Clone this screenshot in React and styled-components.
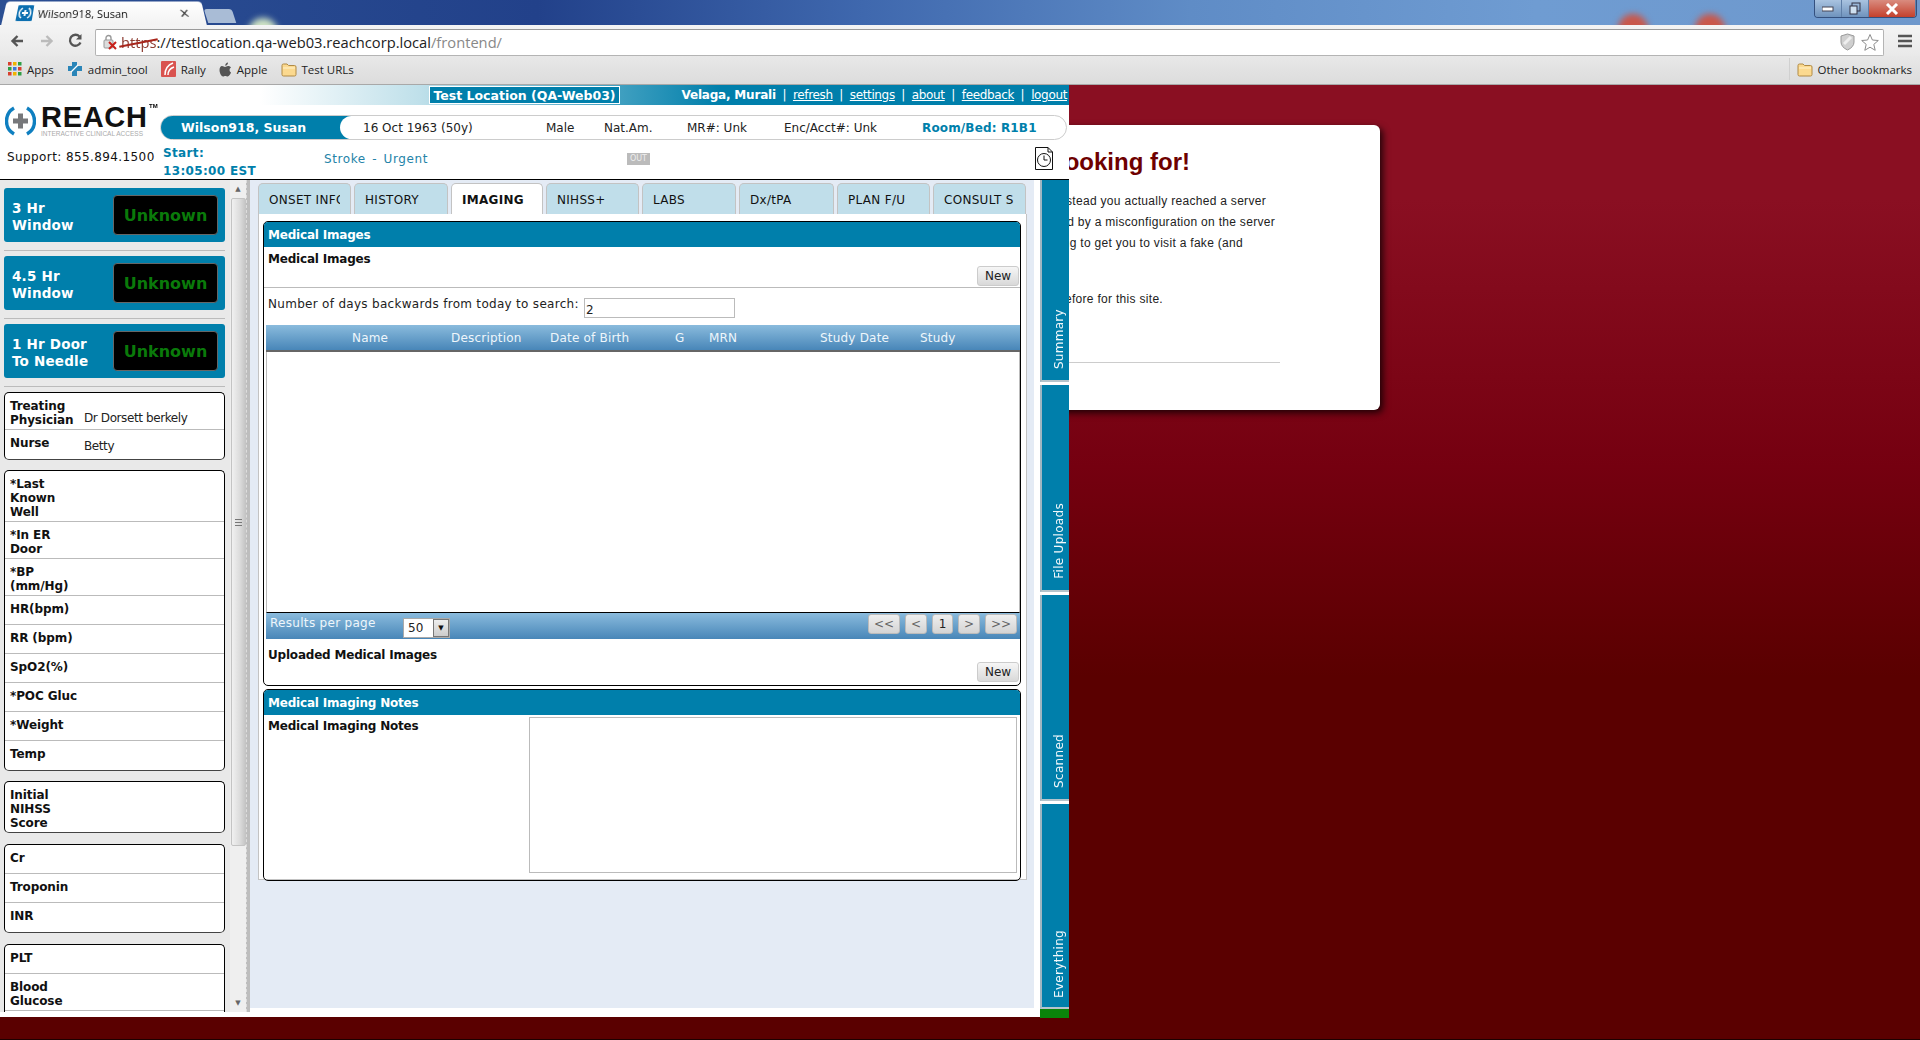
import styled, { createGlobalStyle } from 'styled-components'

const GlobalStyle = createGlobalStyle`
  html, body { margin: 0; padding: 0; height: 100%; overflow: hidden; }
  body { font-family: "DejaVu Sans", sans-serif; background: #5a0000; }
  * { box-sizing: border-box; }
`

const BLUE = '#007fab'

/* ---------- browser chrome ---------- */
const Browser = styled.div`
  width: 1920px;
  height: 85px;
  display: flex;
  flex-direction: column;
  font-family: "Open Sans", sans-serif;
`
const TabStrip = styled.div`
  height: 25px;
  position: relative;
  display: flex;
  align-items: flex-end;
  padding-left: 4px;
  overflow: hidden;
  background: linear-gradient(90deg, #2b4f93 0%, #22418a 28%, #3f68ae 45%, #5f8cc6 62%, #6f9cd2 80%, #6e98cc 100%);
`
const BrowserTab = styled.div`
  width: 200px;
  height: 24px;
  background: linear-gradient(#fff, #f3f3f3);
  border-radius: 4px 4px 0 0;
  transform: perspective(60px) rotateX(8deg);
  display: flex;
  align-items: center;
  padding-left: 13px;
  gap: 5px;
  font-size: 11px;
  color: #111;
  flex: none;
`
const TabTitle = styled.span`
  flex: 1;
`
const TabClose = styled.span`
  font-size: 13px;
  color: #444;
  margin-right: 14px;
`
const NewTab = styled.div`
  width: 28px;
  height: 14px;
  background: #a9bcd6;
  border-radius: 3px 3px 0 0;
  margin: 0 0 2px 2px;
  transform: skewX(18deg);
  flex: none;
`
const Blob = styled.div`
  position: absolute;
  top: ${p => p.$top}px;
  left: ${p => p.$left}px;
  width: ${p => p.$size}px;
  height: ${p => p.$size}px;
  border-radius: 50%;
  background: ${p => p.$color};
  filter: blur(3px);
`
const WindowControls = styled.div`
  position: absolute;
  top: 0;
  right: 3px;
  width: 103px;
  height: 18px;
  display: flex;
  border: 1px solid #34507e;
  border-top: 0;
  border-radius: 0 0 4px 4px;
  overflow: hidden;
`
const WinButton = styled.div`
  flex: ${p => p.$grow};
  display: flex;
  align-items: center;
  justify-content: center;
  background: ${p => p.$close ? 'linear-gradient(#d98c7f, #c4402c)' : 'linear-gradient(#a9c3e0, #6f93bd)'};
  border-right: 1px solid #5f7fa8;
`
const Toolbar = styled.div`
  height: 31px;
  background: linear-gradient(#f4f4f4, #e9e9e9);
  display: flex;
  align-items: center;
  padding-left: 8px;
`
const NavIcon = styled.div`
  width: ${p => p.$w}px;
  margin-left: ${p => p.$ml || 0}px;
  display: flex;
  justify-content: center;
  flex: none;
`
const AddressBar = styled.div`
  width: 1789px;
  height: 27px;
  margin-left: 7px;
  margin-top: 3px;
  background: #fff;
  border: 1px solid #b4b4b4;
  border-top-color: #9a9a9a;
  border-radius: 2px;
  display: flex;
  align-items: center;
  padding-left: 7px;
  padding-right: 3px;
  font-size: 14.7px;
  flex: none;
`
const Https = styled.span`
  position: relative;
  color: #8d3b30;
  margin-left: 3px;
  &::after {
    content: '';
    position: absolute;
    left: -2px;
    right: -2px;
    top: 10px;
    height: 2px;
    background: #a8261c;
    transform: rotate(-11deg);
  }
`
const UrlHost = styled.span`
  color: #222;
`
const UrlPath = styled.span`
  color: #888;
  flex: 1;
`
const Bookmarks = styled.div`
  height: 29px;
  background: linear-gradient(#e8e8e8, #dcdcdc);
  border-bottom: 1px solid #a8a8a8;
  display: flex;
  align-items: center;
  padding: 0 8px 2px 8px;
  font-size: 11.5px;
  color: #222;
`
const Bookmark = styled.div`
  display: flex;
  align-items: center;
  gap: 5px;
  margin-right: 13px;
  &:last-child { margin-right: 0; }
`
const BookmarkSpacer = styled.div`
  flex: 1;
`
const BookmarkDivider = styled.div`
  width: 1px;
  height: 22px;
  background: #d0d0d0;
  margin-right: 7px;
`

const Folder = () => (
  <svg width="16" height="15" viewBox="0 0 16 15">
    <path d="M1 3.5 Q1 2 2.5 2 H6 L7.5 3.5 H13.5 Q15 3.5 15 5 V12.5 Q15 14 13.5 14 H2.5 Q1 14 1 12.5 Z" fill="#fbd98f" stroke="#b08a45" />
    <path d="M2 6 H14" stroke="#fff2cc" />
  </svg>
)

/* ---------- page behind the app ---------- */
const Backdrop = styled.div`
  height: 955px;
  padding-top: 40px;
  background: linear-gradient(#8a0f22 0%, #8a0f22 12%, #750010 40%, #5a0000 62%, #5a0000 100%);
  border-bottom: 1px solid #1d0000;
`
const WarningCard = styled.div`
  width: 840px;
  height: 285px;
  margin: 0 auto;
  padding-right: 100px;
  background: #fff;
  border-radius: 6px;
  box-shadow: 3px 3px 7px rgba(0, 0, 0, 0.75);
  font-family: "Liberation Sans", sans-serif;
`
const WarningTitle = styled.h1`
  margin: 0;
  padding-top: 23px;
  padding-right: 90px;
  text-align: right;
  font-size: 24px;
  line-height: 28px;
  color: #6e0000;
`
const WarningLine = styled.div`
  text-align: right;
  white-space: nowrap;
  font-size: 12px;
  line-height: 21px;
  color: #222;
  letter-spacing: 0.3px;
  padding-right: ${p => p.$inset}px;
  margin-top: ${p => p.$top || 0}px;
`
const WarningRule = styled.div`
  height: 1px;
  background: #ccc;
  margin-top: 52px;
`

/* ---------- app window ---------- */
const AppWindow = styled.div`
  position: absolute;
  top: 85px;
  left: 0;
  width: 1069px;
  height: 932px;
  background: #fff;
  display: flex;
  flex-direction: column;
`
const TopBar = styled.div`
  height: 20px;
  flex: none;
  display: flex;
  align-items: center;
  color: #fff;
  font-size: 12px;
  padding-left: 429px;
  padding-right: 2px;
  background: linear-gradient(90deg, #fff 0, #fff 260px, #bfe0ea 420px, ${BLUE} 720px);
`
const LocationLabel = styled.div`
  width: 191px;
  height: 18px;
  background: ${BLUE};
  border: 1px solid #fff;
  font-weight: bold;
  font-size: 12.5px;
  display: flex;
  align-items: center;
  justify-content: center;
  white-space: nowrap;
`
const UserLinks = styled.div`
  margin-left: auto;
  display: flex;
  align-items: center;
  white-space: nowrap;
  gap: 6.5px;
`
const UserName = styled.b`
  font-size: 12px;
  letter-spacing: -0.2px;
`
const TopLink = styled.a`
  color: #fff;
  text-decoration: underline;
  letter-spacing: -0.35px;
`
const HeaderMain = styled.div`
  height: 75px;
  flex: none;
  display: grid;
  grid-template-columns: 160px 907px;
  border-bottom: 1px solid #000;
`
const LogoColumn = styled.div`
  display: flex;
  flex-direction: column;
`
const Logo = styled.div`
  height: 30px;
  margin-top: 1px;
  display: flex;
  padding-left: 5px;
`
const LogoWords = styled.div`
  margin-left: 5px;
  position: relative;
  font-family: "Liberation Sans", sans-serif;
`
const LogoMark = styled.div`
  font-size: 29px;
  font-weight: bold;
  line-height: 22px;
  letter-spacing: 0.7px;
  color: #111;
`
const LogoSub = styled.div`
  font-size: 6.5px;
  line-height: 8px;
  color: #aaa;
  white-space: nowrap;
  margin-top: 2px;
`
const LogoTm = styled.sup`
  position: absolute;
  top: -4px;
  left: 108px;
  font-size: 6px;
  line-height: 8px;
  font-weight: bold;
`
const Support = styled.div`
  margin-top: 14px;
  padding-left: 7px;
  font-size: 12px;
  letter-spacing: 0.4px;
  color: #111;
  white-space: nowrap;
`
const PatientColumn = styled.div`
  display: flex;
  flex-direction: column;
  padding-top: 10px;
`
const PatientPill = styled.div`
  height: 25px;
  display: flex;
  align-items: center;
  position: relative;
  border: 1px solid #ccc;
  border-radius: 13px;
  font-size: 12px;
  color: #222;
  overflow: hidden;
`
const PatientName = styled.div`
  width: 190px;
  height: 100%;
  background: ${BLUE};
  color: #fff;
  font-weight: bold;
  font-size: 12.5px;
  display: flex;
  align-items: center;
  padding-left: 20px;
  position: relative;
  &::after {
    content: '';
    position: absolute;
    right: -1px;
    top: 0;
    width: 12px;
    height: 100%;
    background: #fff;
    border-radius: 12px 0 0 12px;
  }
`
const PatientField = styled.div`
  position: absolute;
  left: ${p => p.$x}px;
  white-space: nowrap;
  color: ${p => p.$accent ? BLUE : '#222'};
  font-weight: ${p => p.$accent ? 'bold' : 'normal'};
  letter-spacing: ${p => p.$accent ? '0.15px' : '0'};
`
const StatusRow = styled.div`
  height: 39px;
  position: relative;
  display: flex;
  color: ${BLUE};
  font-size: 12px;
`
const StartTime = styled.div`
  width: 162px;
  padding: 4px 0 0 3px;
  font-weight: bold;
  line-height: 18px;
  letter-spacing: 0.35px;
`
const Stroke = styled.div`
  width: 305px;
  padding-top: 12px;
  padding-left: 2px;
  letter-spacing: 0.6px;
  word-spacing: 2px;
  color: #2483a8;
`
const OutBadge = styled.div`
  width: 23px;
  height: 12px;
  margin-top: 13px;
  background: #bbb;
  color: #eee;
  font-size: 8px;
  line-height: 12px;
  text-align: center;
`
const ClockDoc = styled.svg`
  position: absolute;
  top: 7px;
  right: 14px;
`

const AppBody = styled.div`
  flex: 1;
  display: flex;
  min-height: 0;
  align-items: flex-start;
`

/* sidebar */
const Sidebar = styled.div`
  width: 230px;
  height: 832px;
  flex: none;
  overflow: hidden;
  background: #e9e9e9;
  padding: 8px 5px 0 4px;
`
const TimerCard = styled.div`
  height: 54px;
  background: ${BLUE};
  border-radius: 3px;
  display: flex;
  align-items: center;
  justify-content: space-between;
  padding: 0 7px 0 8px;
  color: #fff;
  font-weight: bold;
  font-size: 13.5px;
  line-height: 17px;
  letter-spacing: 0.2px;
`
const TimerText = styled.div`
  padding-top: 3px;
`
const TimerValue = styled.div`
  width: 105px;
  height: 40px;
  background: #000;
  border: 1px solid #666;
  border-radius: 4px;
  color: #0a7a0a;
  font-size: 16px;
  letter-spacing: 0;
  padding-top: 1px;
  display: flex;
  align-items: center;
  justify-content: center;
`
const TimerRule = styled.div`
  height: 1px;
  background: #bbb;
  margin: 8px 0 5px;
`
const InfoBox = styled.div`
  background: #fff;
  border: 1px solid #000;
  border-bottom: 1px solid #444;
  border-radius: 5px;
  margin-bottom: ${p => p.$gap}px;
  &:last-child { margin-bottom: 0; }
`
const InfoRow = styled.div`
  height: ${p => p.$h}px;
  display: flex;
  padding: 6px 0 0 5px;
  border-bottom: 1px solid #bbb;
  &:last-child { border-bottom: 0; }
`
const InfoLabel = styled.div`
  width: 74px;
  flex: none;
  font-weight: bold;
  font-size: 12px;
  line-height: 14px;
  letter-spacing: -0.1px;
  color: #111;
`
const InfoValue = styled.div`
  font-size: 12px;
  line-height: 14px;
  color: #222;
  letter-spacing: -0.4px;
  white-space: nowrap;
  padding-top: ${p => p.$top}px;
`

/* scrollbar + splitter */
const ScrollBar = styled.div`
  width: 16px;
  height: 832px;
  flex: none;
  background: #efefef;
  display: flex;
  flex-direction: column;
  align-items: center;
`
const ScrollArrow = styled.div`
  height: 18px;
  flex: none;
  display: flex;
  align-items: center;
  color: #666;
  font-size: 7px;
`
const ScrollThumb = styled.div`
  width: 15px;
  height: 648px;
  flex: none;
  border: 1px solid #c4c4c4;
  border-radius: 2px;
  background: linear-gradient(90deg, #f1f1f1, #dcdcdc 60%, #c6c6c6);
  display: flex;
  align-items: center;
  justify-content: center;
`
const Grip = styled.div`
  width: 7px;
  height: 7px;
  border-top: 1px solid #777;
  border-bottom: 1px solid #777;
  position: relative;
  &::after {
    content: '';
    position: absolute;
    top: 2px;
    left: 0;
    width: 7px;
    height: 1px;
    background: #777;
  }
`
const ScrollSpacer = styled.div`
  flex: 1;
`
const Splitter = styled.div`
  width: 4px;
  height: 832px;
  flex: none;
  background: #bdbdbd;
  border-left: 1px dashed #ddd;
`

/* main column */
const MainArea = styled.div`
  width: 784px;
  height: 828px;
  flex: none;
  background: #e4ebf5;
  padding: 3px 7px 0 8px;
`
const TabsRow = styled.div`
  height: 31px;
  display: flex;
  gap: 3px;
`
const MainTab = styled.div`
  width: ${p => p.$w}px;
  height: 31px;
  flex: none;
  padding: 9px 10px 0 10px;
  border: 1px solid #c3c3c3;
  border-bottom: 0;
  border-radius: 5px 5px 0 0;
  font-size: 12px;
  letter-spacing: 0.3px;
  background: ${p => p.$active ? '#fff' : '#c0deea'};
  color: #111;
  font-weight: ${p => p.$active ? 'bold' : 'normal'};
`
const TabText = styled.div`
  overflow: hidden;
  white-space: nowrap;
`
const TabPanel = styled.div`
  height: 666px;
  width: 769px;
  background: #fff;
  border: 1px solid #c3c3c3;
  border-top: 0;
  padding: 7px 5px 0 4px;
`
const Section = styled.div`
  height: ${p => p.$h}px;
  border: 1px solid #000;
  border-radius: 5px;
  margin-bottom: 3px;
  overflow: hidden;
  display: flex;
  flex-direction: column;
`
const SectionHeader = styled.div`
  height: 25px;
  flex: none;
  background: ${BLUE};
  color: #fff;
  font-weight: bold;
  font-size: 12px;
  line-height: 26px;
  letter-spacing: -0.2px;
  padding-left: 4px;
`
const ImagesHead = styled.div`
  height: 41px;
  flex: none;
  border-bottom: 1px solid #bbb;
  position: relative;
  padding: 4px 0 0 4px;
`
const FieldTitle = styled.div`
  font-weight: bold;
  font-size: 12px;
  line-height: 16px;
  letter-spacing: -0.2px;
  color: #111;
  white-space: nowrap;
`
const NewButton = styled.button`
  position: absolute;
  right: 1px;
  bottom: ${p => p.$bottom}px;
  width: 42px;
  height: 20px;
  padding: 0;
  font-family: inherit;
  font-size: 12px;
  color: #222;
  border: 1px solid #ccc;
  border-radius: 3px;
  background: linear-gradient(#f6f6f6, #d9d9d9);
`
const SearchRow = styled.div`
  height: 37px;
  flex: none;
  display: flex;
  padding: 9px 0 0 4px;
  font-size: 12px;
  letter-spacing: 0.3px;
  color: #222;
  white-space: nowrap;
`
const DaysInput = styled.div`
  width: 151px;
  height: 20px;
  margin-left: 5px;
  margin-top: 1px;
  border: 1px solid #bbb;
  font-size: 12px;
  line-height: 22px;
  padding-left: 1px;
  color: #222;
`
const ResultsTable = styled.div`
  width: 754px;
  margin-left: 2px;
  flex: none;
`
const TableHead = styled.div`
  height: 27px;
  background: linear-gradient(#8abbdd, #4886b8);
  border-bottom: 2px solid #666;
  color: #eef6fb;
  font-size: 12px;
  line-height: 27px;
  letter-spacing: 0.2px;
  position: relative;
`
const HeadCell = styled.span`
  position: absolute;
  left: ${p => p.$x}px;
  white-space: nowrap;
`
const TableBody = styled.div`
  height: 261px;
  border-left: 1px solid #bbb;
  border-right: 1px solid #bbb;
  border-bottom: 1px solid #000;
`
const TableFoot = styled.div`
  height: 26px;
  background: linear-gradient(#8abbdd, #4886b8);
  color: #eef6fb;
  font-size: 12px;
  display: flex;
  padding-left: 4px;
`
const FootLabel = styled.div`
  width: 133px;
  padding-top: 3px;
  letter-spacing: 0.3px;
`
const PageSize = styled.div`
  width: 47px;
  height: 20px;
  margin-top: 5px;
  background: #fff;
  border: 1px solid #aaa;
  color: #222;
  display: flex;
  align-items: center;
  padding-left: 4px;
  justify-content: space-between;
`
const PageSizeCaret = styled.div`
  width: 16px;
  height: 18px;
  background: linear-gradient(#eee, #ccc);
  border: 1px solid #777;
  display: flex;
  align-items: center;
  justify-content: center;
  color: #111;
  font-size: 7px;
`
const Pager = styled.div`
  margin-left: auto;
  margin-right: 3px;
  display: flex;
  gap: 5px;
  padding-top: 1px;
`
const PagerButton = styled.div`
  width: ${p => p.$w}px;
  height: 20px;
  border: 1px solid #bbb;
  border-radius: 3px;
  background: linear-gradient(#efefef, #d4d4d4);
  color: ${p => p.$current ? '#222' : '#666'};
  font-size: 12px;
  line-height: 18px;
  text-align: center;
`
const UploadRow = styled.div`
  flex: 1;
  position: relative;
  padding: 8px 0 0 4px;
`
const NotesBody = styled.div`
  flex: 1;
  display: flex;
  padding: 2px 3px 0 4px;
`
const NotesLabel = styled.div`
  width: 261px;
  flex: none;
  padding-top: 1px;
`
const NotesBox = styled.div`
  width: 489px;
  height: 156px;
  border: 1px solid #bbb;
`

/* right rail */
const Rail = styled.div`
  width: 29px;
  height: 836px;
  margin-left: 6px;
  flex: none;
  display: flex;
  flex-direction: column;
  gap: 3px;
`
const RailTab = styled.div`
  height: ${p => p.$h}px;
  flex: none;
  background: ${BLUE};
  border-left: 2px solid #9fb6c2;
  border-bottom: 2px solid #b5c4cc;
  display: flex;
  align-items: flex-end;
  justify-content: center;
  padding: 0 0 ${p => p.$pad}px 6px;
  color: #f2f8fb;
`
const RailLabel = styled.span`
  writing-mode: vertical-rl;
  transform: rotate(180deg);
  font-size: 12px;
  line-height: 14px;
  letter-spacing: 0.3px;
  white-space: nowrap;
`
const RailStatus = styled.div`
  height: 9px;
  margin-top: -3px;
  flex: none;
  background: #0a840a;
`

const ParenPlus = () => (
  <svg width="31" height="30" viewBox="0 0 31 30">
    <path d="M9 2 A15 15 0 0 0 9 28" fill="none" stroke="#0f7fc0" strokeWidth="3.4" />
    <path d="M22 2 A15 15 0 0 1 22 28" fill="none" stroke="#0f7fc0" strokeWidth="3.4" />
    <path d="M15.5 7.5 V22.5 M8 15 H23" stroke="#77787b" strokeWidth="5" />
  </svg>
)

const Favicon = () => (
  <svg width="16" height="16" viewBox="0 0 16 16">
    <rect width="16" height="16" rx="1" fill="#0c6fb0" />
    <path d="M5 3 A6 6 0 0 0 5 13 M11 3 A6 6 0 0 1 11 13" fill="none" stroke="#fff" strokeWidth="1.4" />
    <path d="M8 5 V11 M5 8 H11" stroke="#fff" strokeWidth="1.8" />
  </svg>
)

const timers = ['3 Hr|Window', '4.5 Hr|Window', '1 Hr Door|To Needle']

const Label = ({ text }) => text.split('|').map((part, i) => <div key={i}>{part}</div>)

const vitals = [
  ['*Last|Known|Well', 51], ['*In ER|Door', 37], ['*BP|(mm/Hg)', 37], ['HR(bpm)', 29], ['RR (bpm)', 29],
  ['SpO2(%)', 29], ['*POC Gluc', 29], ['*Weight', 29], ['Temp', 29],
]
const labs = [['Cr', 29], ['Troponin', 29], ['INR', 29]]
const tabs = [
  ['ONSET INFO', 93], ['HISTORY', 94], ['IMAGING', 92, true], ['NIHSS+', 93],
  ['LABS', 94], ['Dx/tPA', 95], ['PLAN F/U', 93], ['CONSULT S', 93],
]
const columns = [['Name', 86], ['Description', 185], ['Date of Birth', 284], ['G', 409], ['MRN', 443], ['Study Date', 554], ['Study', 654]]

const App = () => {
  return (
    <>
      <GlobalStyle />
      <Browser>
        <TabStrip>
          <Blob $top={18} $left={248} $size={30} $color="#cfe3c4" />
          <Blob $top={14} $left={1618} $size={30} $color="#c9574a" />
          <Blob $top={14} $left={1695} $size={30} $color="#c9574a" />
          <BrowserTab>
            <Favicon />
            <TabTitle>Wilson918, Susan</TabTitle>
            <TabClose>✕</TabClose>
          </BrowserTab>
          <NewTab />
          <WindowControls>
            <WinButton $grow="27">
              <svg width="12" height="6"><rect y="1" width="11" height="4" fill="#fff" stroke="#445" /></svg>
            </WinButton>
            <WinButton $grow="26">
              <svg width="12" height="13"><rect x="3" y="1" width="8" height="8" fill="none" stroke="#334" /><rect x="1" y="4" width="7" height="8" fill="#cfe0f0" stroke="#334" /></svg>
            </WinButton>
            <WinButton $grow="47" $close>
              <svg width="14" height="12"><path d="M2 1 L12 11 M12 1 L2 11" stroke="#fff" strokeWidth="3" /></svg>
            </WinButton>
          </WindowControls>
        </TabStrip>
        <Toolbar>
          <NavIcon $w={18}>
            <svg width="14" height="14" viewBox="0 0 14 14"><path d="M13 7 H3 M7.5 2 L2.5 7 L7.5 12" fill="none" stroke="#555" strokeWidth="2.4" /></svg>
          </NavIcon>
          <NavIcon $w={30} $ml={6}>
            <svg width="14" height="14" viewBox="0 0 14 14"><path d="M1 7 H11 M6.5 2 L11.5 7 L6.5 12" fill="none" stroke="#bbb" strokeWidth="2.4" /></svg>
          </NavIcon>
          <NavIcon $w={26}>
            <svg width="15" height="15" viewBox="0 0 15 15"><path d="M12.5 9.5 A5.5 5.5 0 1 1 11.5 3.5" fill="none" stroke="#555" strokeWidth="2.3" /><path d="M13.5 1 V6.5 H8 Z" fill="#555" /></svg>
          </NavIcon>
          <AddressBar>
            <svg width="15" height="16" viewBox="0 0 15 16">
              <rect x="1" y="6" width="9" height="8" rx="1" fill="#ddd" stroke="#999" />
              <path d="M3 6 V4 A2.5 2.5 0 0 1 8 4 V6" fill="none" stroke="#999" strokeWidth="1.4" />
              <path d="M6 8 L13 15 M13 8 L6 15" stroke="#c8201a" strokeWidth="2" />
            </svg>
            <Https>https</Https>
            <UrlHost>://testlocation.qa-web03.reachcorp.local</UrlHost>
            <UrlPath>/frontend/</UrlPath>
            <svg width="17" height="18" viewBox="0 0 17 18">
              <path d="M8.5 1 L15 3 V9 Q15 14 8.5 17 Q2 14 2 9 V3 Z" fill="#cfcfcf" stroke="#999" />
              <path d="M5 11 L12 4" stroke="#eee" strokeWidth="3" />
            </svg>
            <svg width="20" height="19" viewBox="0 0 20 19" style={{ marginLeft: 4 }}>
              <path d="M10 1.5 L12.4 7 L18.3 7.5 L13.8 11.4 L15.2 17.3 L10 14.2 L4.8 17.3 L6.2 11.4 L1.7 7.5 L7.6 7 Z" fill="#fff" stroke="#8c8c8c" />
            </svg>
          </AddressBar>
          <NavIcon $w={14} $ml={14}>
            <svg width="14" height="14" viewBox="0 0 14 14"><path d="M0 2 H14 M0 7 H14 M0 12 H14" stroke="#555" strokeWidth="2.6" /></svg>
          </NavIcon>
        </Toolbar>
        <Bookmarks>
          <Bookmark>
            <svg width="14" height="14" viewBox="0 0 14 14">
              {[0, 5, 10].flatMap(y => [0, 5, 10].map(x => (
                <rect key={`${x}-${y}`} x={x} y={y} width="3.5" height="3.5" fill={['#d8402f', '#f0b400', '#2f9e44', '#3b78d8'][(x + y * 2) % 4]} />
              )))}
            </svg>
            Apps
          </Bookmark>
          <Bookmark>
            <svg width="16" height="16" viewBox="0 0 16 16">
              <path d="M5 1 H10 V5 H15 V10 H10 V15 H5 V10 H1 V5 H5 Z" fill="#2a85b8" />
              <path d="M4 11 L11 4" stroke="#fff" strokeWidth="1.2" />
            </svg>
            admin_tool
          </Bookmark>
          <Bookmark>
            <svg width="15" height="16" viewBox="0 0 15 16">
              <rect width="15" height="16" rx="1" fill="#d9534f" />
              <path d="M4 14 Q4 5 12 2 M7 14 Q7 8 13 6" fill="none" stroke="#fff" strokeWidth="1.5" />
            </svg>
            Rally
          </Bookmark>
          <Bookmark>
            <svg width="13" height="15" viewBox="0 0 13 15">
              <path d="M9 4 C7.5 4 7 5 6 5 C5 5 4.5 4 3 4 C1.5 4 0.5 6 0.5 8 C0.5 11 2.5 14.5 4 14.5 C5 14.5 5.2 14 6.3 14 C7.4 14 7.6 14.5 8.6 14.5 C10 14.5 11.6 12 12 10.5 C10 9.5 10 6.5 12 5.5 C11 4.3 10 4 9 4 Z M6.2 3.7 C6.2 2 7.5 0.7 9 0.5 C9.1 2.2 7.8 3.6 6.2 3.7 Z" fill="#555" />
            </svg>
            Apple
          </Bookmark>
          <Bookmark>
            <Folder />
            Test URLs
          </Bookmark>
          <BookmarkSpacer />
          <BookmarkDivider />
          <Bookmark>
            <Folder />
            Other bookmarks
          </Bookmark>
        </Bookmarks>
      </Browser>

      <Backdrop>
        <WarningCard>
          <WarningTitle>looking for!</WarningTitle>
          <WarningLine $inset={14} $top={15}>instead you actually reached a server</WarningLine>
          <WarningLine $inset={5}>caused by a misconfiguration on the server</WarningLine>
          <WarningLine $inset={37}>trying to get you to visit a fake (and</WarningLine>
          <WarningLine $inset={117} $top={35}>before for this site.</WarningLine>
          <WarningRule />
        </WarningCard>
      </Backdrop>

      <AppWindow>
        <TopBar>
          <LocationLabel>Test Location (QA-Web03)</LocationLabel>
          <UserLinks>
            <UserName>Velaga, Murali</UserName> |
            <TopLink>refresh</TopLink> |
            <TopLink>settings</TopLink> |
            <TopLink>about</TopLink> |
            <TopLink>feedback</TopLink> |
            <TopLink>logout</TopLink>
          </UserLinks>
        </TopBar>
        <HeaderMain>
          <LogoColumn>
            <Logo>
              <ParenPlus />
              <LogoWords>
                <LogoMark>REACH</LogoMark>
                <LogoSub>INTERACTIVE CLINICAL ACCESS</LogoSub>
                <LogoTm>TM</LogoTm>
              </LogoWords>
            </Logo>
            <Support>Support: 855.894.1500</Support>
          </LogoColumn>
          <PatientColumn>
            <PatientPill>
              <PatientName>Wilson918, Susan</PatientName>
              <PatientField $x={202}>16 Oct 1963 (50y)</PatientField>
              <PatientField $x={385}>Male</PatientField>
              <PatientField $x={443}>Nat.Am.</PatientField>
              <PatientField $x={526}>MR#: Unk</PatientField>
              <PatientField $x={623}>Enc/Acct#: Unk</PatientField>
              <PatientField $x={761} $accent>Room/Bed: R1B1</PatientField>
            </PatientPill>
            <StatusRow>
              <StartTime>Start:<br />13:05:00 EST</StartTime>
              <Stroke>Stroke - Urgent</Stroke>
              <OutBadge>OUT</OutBadge>
              <ClockDoc width="18" height="23" viewBox="0 0 18 23">
                <path d="M0.5 0.5 H13 L17.5 5 V22.5 H0.5 Z" fill="#fff" stroke="#111" />
                <path d="M13 0.5 V5 H17.5" fill="none" stroke="#111" />
                <circle cx="9" cy="13" r="6.5" fill="none" stroke="#111" />
                <path d="M9 8.5 V13 H12.5" fill="none" stroke="#111" />
              </ClockDoc>
            </StatusRow>
          </PatientColumn>
        </HeaderMain>
        <AppBody>
          <Sidebar>
            {timers.map(t => (
              <div key={t}>
                <TimerCard>
                  <TimerText><Label text={t} /></TimerText>
                  <TimerValue>Unknown</TimerValue>
                </TimerCard>
                <TimerRule />
              </div>
            ))}
            <InfoBox $gap={10}>
              <InfoRow $h={37}>
                <InfoLabel><Label text="Treating|Physician" /></InfoLabel>
                <InfoValue $top={12}>Dr Dorsett berkely</InfoValue>
              </InfoRow>
              <InfoRow $h={29}>
                <InfoLabel>Nurse</InfoLabel>
                <InfoValue $top={3}>Betty</InfoValue>
              </InfoRow>
            </InfoBox>
            <InfoBox $gap={10}>
              {vitals.map(([label, h]) => (
                <InfoRow key={label} $h={h}><InfoLabel><Label text={label} /></InfoLabel></InfoRow>
              ))}
            </InfoBox>
            <InfoBox $gap={11}>
              <InfoRow $h={50}><InfoLabel><Label text="Initial|NIHSS|Score" /></InfoLabel></InfoRow>
            </InfoBox>
            <InfoBox $gap={11}>
              {labs.map(([label, h]) => (
                <InfoRow key={label} $h={h}><InfoLabel>{label}</InfoLabel></InfoRow>
              ))}
            </InfoBox>
            <InfoBox $gap={0}>
              <InfoRow $h={29}><InfoLabel>PLT</InfoLabel></InfoRow>
              <InfoRow $h={37}><InfoLabel><Label text="Blood|Glucose" /></InfoLabel></InfoRow>
              <InfoRow $h={29} />
            </InfoBox>
          </Sidebar>
          <ScrollBar>
            <ScrollArrow>▲</ScrollArrow>
            <ScrollThumb><Grip /></ScrollThumb>
            <ScrollSpacer />
            <ScrollArrow>▼</ScrollArrow>
          </ScrollBar>
          <Splitter />
          <MainArea>
            <TabsRow>
              {tabs.map(([name, w, active]) => (
                <MainTab key={name} $w={w} $active={active}><TabText>{name}</TabText></MainTab>
              ))}
            </TabsRow>
            <TabPanel>
              <Section $h={465}>
                <SectionHeader>Medical Images</SectionHeader>
                <ImagesHead>
                  <FieldTitle>Medical Images</FieldTitle>
                  <NewButton $bottom={1}>New</NewButton>
                </ImagesHead>
                <SearchRow>
                  Number of days backwards from today to search:
                  <DaysInput>2</DaysInput>
                </SearchRow>
                <ResultsTable>
                  <TableHead>
                    {columns.map(([name, x]) => <HeadCell key={name} $x={x}>{name}</HeadCell>)}
                  </TableHead>
                  <TableBody />
                  <TableFoot>
                    <FootLabel>Results per page</FootLabel>
                    <PageSize>50<PageSizeCaret>▼</PageSizeCaret></PageSize>
                    <Pager>
                      <PagerButton $w={32}>&lt;&lt;</PagerButton>
                      <PagerButton $w={22}>&lt;</PagerButton>
                      <PagerButton $w={21} $current>1</PagerButton>
                      <PagerButton $w={22}>&gt;</PagerButton>
                      <PagerButton $w={32}>&gt;&gt;</PagerButton>
                    </Pager>
                  </TableFoot>
                </ResultsTable>
                <UploadRow>
                  <FieldTitle>Uploaded Medical Images</FieldTitle>
                  <NewButton $bottom={3}>New</NewButton>
                </UploadRow>
              </Section>
              <Section $h={192}>
                <SectionHeader>Medical Imaging Notes</SectionHeader>
                <NotesBody>
                  <NotesLabel><FieldTitle>Medical Imaging Notes</FieldTitle></NotesLabel>
                  <NotesBox />
                </NotesBody>
              </Section>
            </TabPanel>
          </MainArea>
          <Rail>
            <RailTab $h={202} $pad={11}><RailLabel>Summary</RailLabel></RailTab>
            <RailTab $h={207} $pad={11}><RailLabel>File Uploads</RailLabel></RailTab>
            <RailTab $h={206} $pad={11}><RailLabel>Scanned</RailLabel></RailTab>
            <RailTab $h={205} $pad={9}><RailLabel>Everything</RailLabel></RailTab>
            <RailStatus />
          </Rail>
        </AppBody>
      </AppWindow>
    </>
  )
}

export default App
